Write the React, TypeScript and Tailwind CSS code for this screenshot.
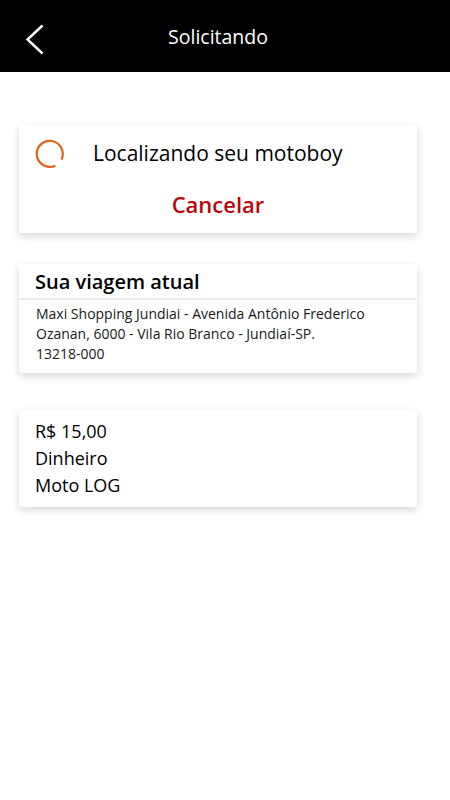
export default function App() {
  return (
    <div className="min-h-[800px] w-[450px] bg-white font-['Open_Sans',sans-serif]">
      {/* Header */}
      <header className="relative flex h-[72px] items-center justify-center bg-black pr-[14px]">
        <svg
          className="absolute left-[25px] top-[24px]"
          width="20"
          height="31"
          viewBox="0 0 20 31"
          fill="none"
        >
          <path d="M17.5 1.5 L2.5 15.5 L17.5 29.5" stroke="white" strokeWidth="2.4" />
        </svg>
        <h1 className="pt-[2px] text-[19.5px] leading-none text-white">Solicitando</h1>
      </header>

      <main className="flex flex-col pl-[19px] pt-[53px]">
        {/* Searching card */}
        <section className="flex h-[108px] w-[398px] flex-col rounded-[3px] bg-white shadow-[0_3px_8px_rgba(0,0,0,0.16)]">
          <div className="flex items-center pl-[16px] pt-[14px]">
            <svg width="29" height="29" viewBox="0 0 29 29" fill="none">
              <path
                d="M19.5 27 A13 13 0 1 1 26.8 19.8"
                stroke="#e06418"
                strokeWidth="2.2"
                strokeLinecap="round"
              />
            </svg>
            <span className="ml-[29px] text-[21px] leading-none text-black">
              Localizando seu motoboy
            </span>
          </div>
          <button className="mt-[25px] self-center text-[22px] font-semibold leading-none text-[#b9060c]">
            Cancelar
          </button>
        </section>

        {/* Trip card */}
        <section className="mt-[31px] flex h-[109px] w-[398px] flex-col rounded-[3px] bg-white shadow-[0_3px_8px_rgba(0,0,0,0.16)]">
          <h2 className="flex h-[34px] items-center px-[16px] pt-[2px] text-[20px] font-semibold text-black">
            Sua viagem atual
          </h2>
          <div className="h-[2px] bg-[#ececec]" />
          <p className="px-[17px] pt-[4px] text-[14px] leading-[20px] text-[#1a1a1a]">
            Maxi Shopping Jundiai - Avenida Antônio Frederico Ozanan, 6000 - Vila Rio Branco - Jundiaí-SP.
            <br />
            13218-000
          </p>
        </section>

        {/* Payment card */}
        <section className="mt-[37px] flex h-[97px] w-[398px] flex-col rounded-[3px] bg-white px-[16px] pt-[8px] shadow-[0_3px_8px_rgba(0,0,0,0.16)]">
          <span className="text-[18px] leading-[27px] text-black">R$ 15,00</span>
          <span className="text-[18px] leading-[27px] text-black">Dinheiro</span>
          <span className="text-[18px] leading-[27px] text-black">Moto LOG</span>
        </section>
      </main>
    </div>
  );
}
